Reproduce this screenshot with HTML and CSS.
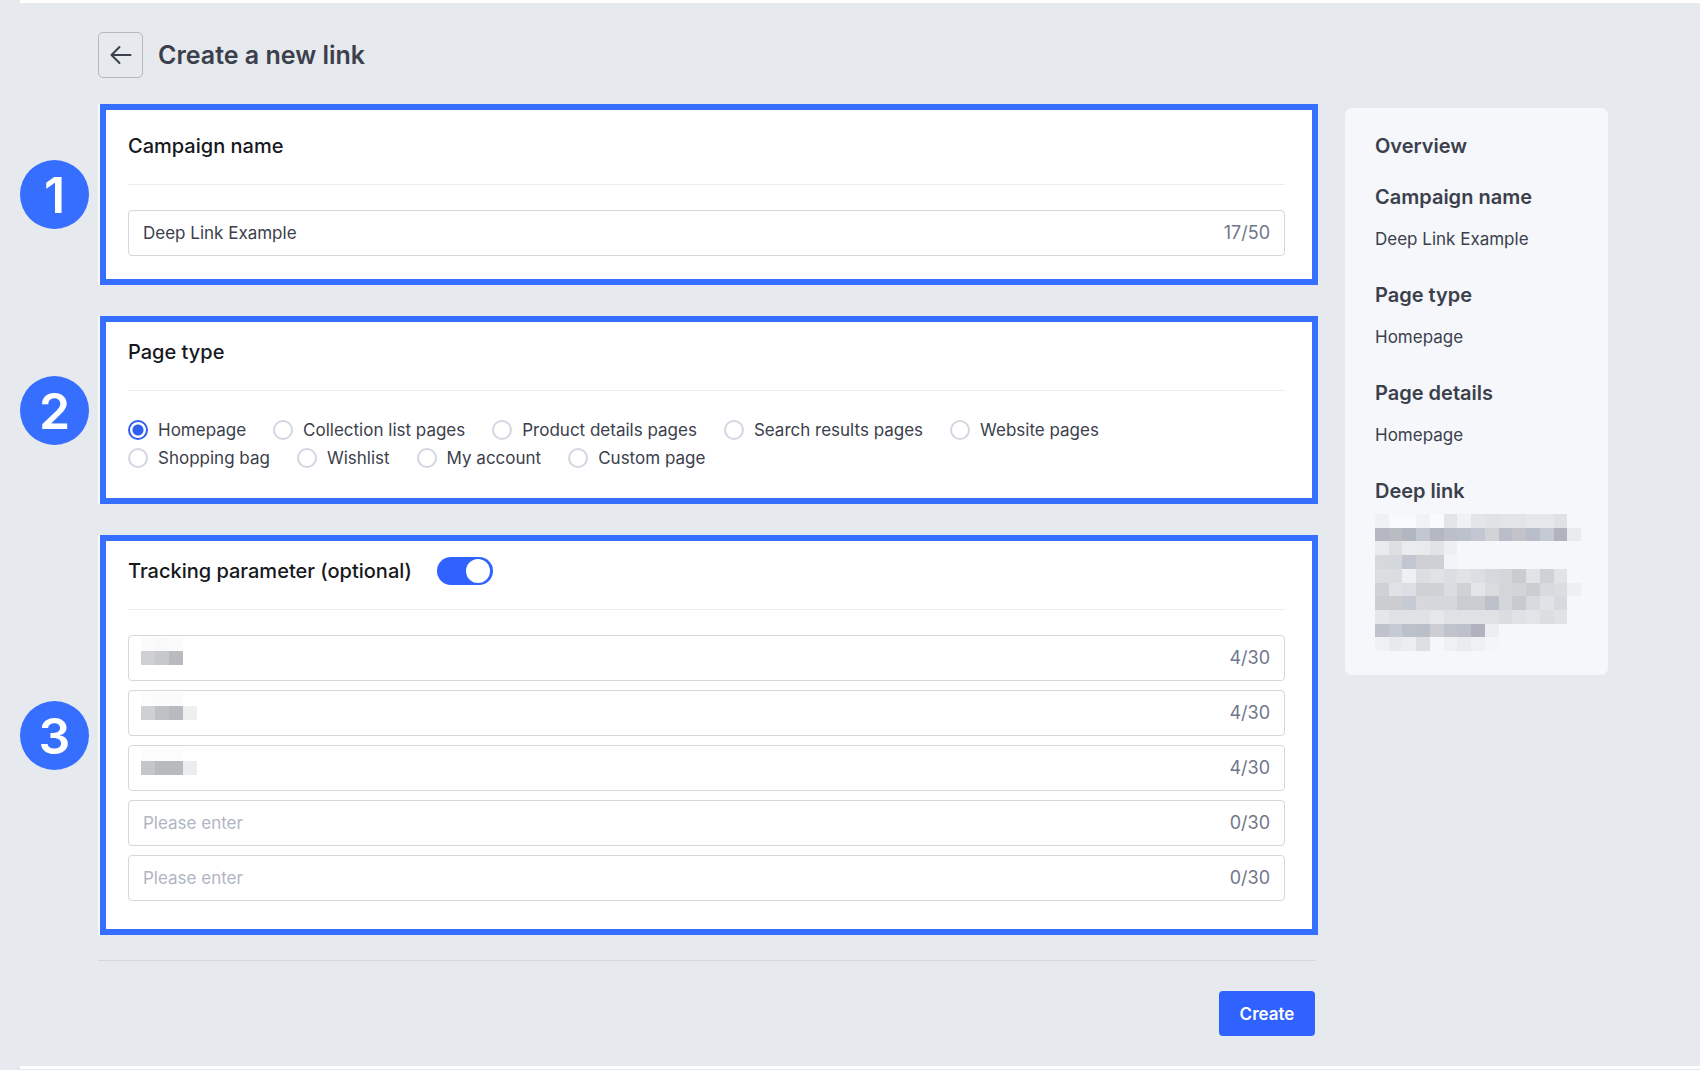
FILE: index.html
```html
<!DOCTYPE html>
<html lang="en">
<head>
    <meta charset="UTF-8">
    <meta name="viewport" content="width=device-width, initial-scale=1.0">
    <title>Create a new link</title>
    <link rel="stylesheet" href="styles.css">
</head>
<body>
    <div class="strip"></div>
    <div class="page">
        <form class="builder" onsubmit="return false">
            <header class="page-header">
                <button type="button" class="back" aria-label="Back">
                    <svg width="22" height="20" viewBox="0 0 22 20" fill="none" stroke="#3b404c" stroke-width="2" stroke-linecap="round" stroke-linejoin="round">
                        <path d="M20.5 10H2M9.5 2L1.5 10l8 8"/>
                    </svg>
                </button>
                <h1>Create a new link</h1>
            </header>

            <!-- Campaign name -->
            <div class="step">
                <span class="badge">1</span>
                <section class="card card-name">
                    <h2><label for="campaign">Campaign name</label></h2>
                    <div class="field">
                        <input type="text" id="campaign" value="Deep Link Example" maxlength="50">
                        <span class="count">17/50</span>
                    </div>
                </section>
            </div>

            <!-- Page type -->
            <div class="step">
                <span class="badge">2</span>
                <section class="card card-type">
                    <h2>Page type</h2>
                    <div class="radio-row">
                        <label><input type="radio" name="type" checked>Homepage</label>
                        <label><input type="radio" name="type">Collection list pages</label>
                        <label><input type="radio" name="type">Product details pages</label>
                        <label><input type="radio" name="type">Search results pages</label>
                        <label><input type="radio" name="type">Website pages</label>
                    </div>
                    <div class="radio-row">
                        <label><input type="radio" name="type">Shopping bag</label>
                        <label><input type="radio" name="type">Wishlist</label>
                        <label><input type="radio" name="type">My account</label>
                        <label><input type="radio" name="type">Custom page</label>
                    </div>
                </section>
            </div>

            <!-- Tracking parameters -->
            <div class="step">
                <span class="badge">3</span>
                <section class="card card-tracking">
                    <h2>
                        <label for="tracking">Tracking parameter (optional)</label>
                        <input type="checkbox" id="tracking" class="switch" checked>
                    </h2>
                    <div class="fields">
                        <div class="field">
                            <svg class="masked" width="56" height="28" viewBox="0 0 4 2" preserveAspectRatio="none" shape-rendering="crispEdges" data-rows="fbfbfb f8faf9 fbfbfb -|cfd0d3 c7c8ca b9babe -"></svg>
                            <input type="text" aria-label="Parameter 1">
                            <span class="count">4/30</span>
                        </div>
                        <div class="field">
                            <svg class="masked" width="56" height="28" viewBox="0 0 4 2" preserveAspectRatio="none" shape-rendering="crispEdges" data-rows="fcfcfc fbfbfb fbfbfb -|cfd0d4 c0c1c5 b9babf eeefef"></svg>
                            <input type="text" aria-label="Parameter 2">
                            <span class="count">4/30</span>
                        </div>
                        <div class="field">
                            <svg class="masked" width="56" height="28" viewBox="0 0 4 2" preserveAspectRatio="none" shape-rendering="crispEdges" data-rows="fcfcfc fcfcfc fcfcfc -|c5c6c9 b9babe b9babf ebecee"></svg>
                            <input type="text" aria-label="Parameter 3">
                            <span class="count">4/30</span>
                        </div>
                        <div class="field">
                            <input type="text" aria-label="Parameter 4" placeholder="Please enter">
                            <span class="count">0/30</span>
                        </div>
                        <div class="field">
                            <input type="text" aria-label="Parameter 5" placeholder="Please enter">
                            <span class="count">0/30</span>
                        </div>
                    </div>
                </section>
            </div>

            <footer class="actions">
                <button type="submit" class="create">Create</button>
            </footer>
        </form>

        <aside class="overview">
            <h3>Overview</h3>
            <h3>Campaign name</h3>
            <p>Deep Link Example</p>
            <h3>Page type</h3>
            <p>Homepage</p>
            <h3>Page details</h3>
            <p>Homepage</p>
            <h3>Deep link</h3>
            <svg class="masked" width="206" height="137" viewBox="0 0 15 10" preserveAspectRatio="none" shape-rendering="crispEdges" data-rows="f0f1f4 f8f9fb f8f9fb f1f2f5 f9fafc e3e4e8 f0f1f4 e3e5e8 e0e2e6 e2e4e7 e2e4e7 e6e7ea e6e7ea dfe1e5
|b5b8c3 b9bdc3 b2b6c1 c2c6d0 b4b7c2 bbbfc9 bcc1cb c2c6d0 d1d3d7 b9bdc9 c1c3c8 b9bdc9 c4c9d3 b0b3be e9ebee
|e9eaed dddfe3 ebecef e9eaed e1e3e6 eeeff2
|d6d8dc d4d7db c2c6d1 cdcfd3 cdd0d5 f3f4f7
|dbdde1 dbdde1 eff0f3 dbdde1 e0e2e6 dcdee3 e0e2e6 dbdee3 d5d8dc d5d6da cacccf e1e3e6 cfd1d6 e1e3e6
|ced2d7 e0e2e5 dbdfe4 cfd1d5 cfd1d5 dadce1 cfd1d5 e4e5e9 d9dbdf d3d5d9 d2d4d8 cbcdd1 d8dadf dbdde1 eeeff2
|cbcdd1 cbcdd1 c6cad5 d6d8dc d5d7dc d5d7dc c9cdd2 cbcdd2 bcc0cb d3d7dc c8cacf d8dadf e0e2e6 d7d9de
|e4e6e9 dfe1e5 dfe1e5 dfe1e5 e5e7ea e0e1e5 e0e1e5 e0e1e5 e0e1e5 dadce0 dfe1e5 e2e4e8 dbdde1 e0e2e6
|bfc2ca c6cad4 bcc0c8 bbbfc8 cdced3 bfc3cb bdc1cc b0b3be eceef1
|f0f1f4 e7e9ec ecedf1 dddfe3 f5f6fa eef0f3 e9ebee eff0f4 f4f5f8"></svg>
        </aside>
    </div>
    <div class="strip"></div>

    <script>
        // Fill the masked values with their blocks, one colour per cell
        document.querySelectorAll('.masked').forEach(function (svg) {
            svg.dataset.rows.split('|').forEach(function (row, y) {
                row.trim().split(' ').forEach(function (color, x) {
                    if (color === '-') return;
                    let rect = document.createElementNS('http://www.w3.org/2000/svg', 'rect');
                    rect.setAttribute('x', x);
                    rect.setAttribute('y', y);
                    rect.setAttribute('width', 1);
                    rect.setAttribute('height', 1);
                    rect.setAttribute('fill', '#' + color);
                    svg.appendChild(rect);
                });
            });
        });
    </script>
</body>
</html>
```
FILE: styles.css
```css
* {
    box-sizing: border-box;
}
body {
    margin: 0;
    background: #e6e9ee;
    color: #3b404c;
    font-family: Inter, "Liberation Sans", sans-serif;
    font-size: 17px;
    line-height: 28px;
}
h1, h2, h3, p {
    margin: 0;
}
input, button {
    font: inherit;
    color: inherit;
    margin: 0;
}
.strip {
    height: 3px;
    margin-left: 20px;
    background: #fff;
}
.page {
    display: flex;
    align-items: flex-start;
    gap: 27px;
    padding: 29px 92px 30px 20px;
}
.builder {
    flex: 1;
    min-width: 0;
}
.page-header {
    display: flex;
    align-items: center;
    gap: 15px;
    margin: 0 0 26px 78px;
}
.page-header h1 {
    font-size: 25px;
    font-weight: 600;
}
.back {
    display: flex;
    align-items: center;
    justify-content: center;
    width: 45px;
    height: 46px;
    padding: 0;
    background: none;
    border: 1px solid #b4b8c5;
    border-radius: 5px;
    cursor: pointer;
}

/* numbered steps */
.step {
    display: flex;
    align-items: center;
    gap: 11px;
    margin-bottom: 31px;
}
.badge {
    flex: none;
    width: 69px;
    height: 69px;
    border-radius: 50%;
    background: #366fff;
    color: #fff;
    font-size: 50px;
    font-weight: 600;
    line-height: 71px;
    text-align: center;
}
.card {
    flex: 1;
    min-width: 0;
    padding: 16px 27px 24px 22px;
    background: #fff;
    border: 6px solid #366fff;
    box-shadow: -2px 0 #f8f9fc;
}
.card-name {
    padding-top: 22px;
    padding-bottom: 23px;
}
.card-type {
    padding-bottom: 26px;
}
.card-tracking {
    padding-bottom: 28px;
}
.card h2 {
    display: flex;
    align-items: center;
    gap: 25px;
    height: 53px;
    margin-bottom: 25px;
    padding-bottom: 24px;
    border-bottom: 1px solid #ebecef;
    color: #16181d;
    font-size: 20px;
    font-weight: 500;
}

/* text fields */
.fields {
    display: grid;
    gap: 9px;
}
.field {
    display: flex;
    align-items: center;
    height: 46px;
    padding: 0 14px 0 12px;
    background: #fff;
    border: 1px solid #d5d7df;
    border-radius: 4px;
}
.field input {
    flex: 1;
    min-width: 0;
    padding: 0 2px;
    background: none;
    border: 0;
    outline: 0;
}
.field input::placeholder {
    color: #b1b5c3;
    opacity: 1;
}
.field .masked {
    margin-bottom: 14px;
}
.count {
    color: #70768a;
    font-size: 18px;
}

/* radios and switch */
.radio-row {
    display: flex;
    gap: 27px;
}
.radio-row label {
    display: flex;
    align-items: center;
    gap: 10px;
}
.radio-row input {
    appearance: none;
    width: 20px;
    height: 20px;
    border: 2px solid #d3d6e0;
    border-radius: 50%;
}
.radio-row input:checked {
    border-color: #2f5ff0;
    background: radial-gradient(circle, #2f5ff0 5px, #fff 6px);
}
.switch {
    appearance: none;
    width: 56px;
    height: 28px;
    padding: 2px 3px;
    border-radius: 14px;
    background: #2f62ff;
}
.switch::before {
    content: "";
    display: block;
    width: 24px;
    height: 24px;
    border-radius: 50%;
    background: #fff;
}
.switch:checked::before {
    margin-left: auto;
}

.actions {
    margin: -6px 3px 0 78px;
    padding-top: 30px;
    border-top: 1px solid #d3d7dd;
}
.create {
    display: block;
    width: 96px;
    height: 45px;
    margin-left: auto;
    padding: 0;
    background: #2f62ff;
    border: 0;
    border-radius: 4px;
    color: #fff;
    font-weight: 600;
    cursor: pointer;
}

/* summary on the right */
.overview {
    flex: none;
    width: 263px;
    margin-top: 76px;
    padding: 24px 27px 24px 30px;
    background: #f5f7fb;
    border-radius: 7px;
}
.overview h3 {
    margin-bottom: 14px;
    font-size: 20px;
    font-weight: 600;
}
.overview h3:first-child {
    margin-bottom: 23px;
}
.overview h3:last-of-type {
    margin-bottom: 9px;
}
.overview p {
    margin-bottom: 28px;
}
.overview .masked {
    display: block;
}
```
